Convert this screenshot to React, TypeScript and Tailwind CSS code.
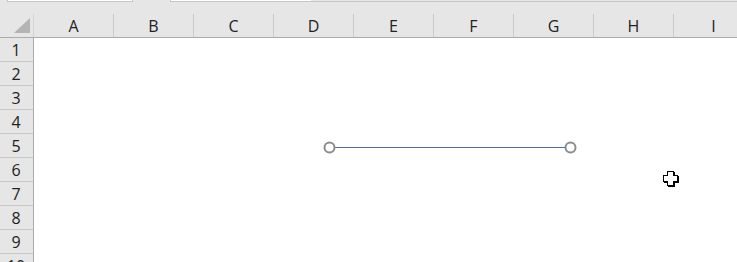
import React from "react";

const cols = ["A", "B", "C", "D", "E", "F", "G", "H", "I"];
const rows = [1, 2, 3, 4, 5, 6, 7, 8, 9, 10];

const App: React.FC = () => {
    return (
        <div className="relative w-[737px] h-[262px] overflow-hidden bg-white" style={{ fontFamily: '"Open Sans", "Liberation Sans", Arial, sans-serif' }}>
            {/* strip above the sheet */}
            <div className="flex h-[14px] bg-[#e6e6e6]">
                <div className="ml-[7px] w-[126px] h-[2px] bg-white border-b border-x border-[#c6c6c6]"></div>
                <div className="ml-[37px] w-[141px] h-[2px] bg-white border-b border-l border-[#c6c6c6]"></div>
                <div className="flex-1 h-[2px] border-b border-[#c6c6c6]"></div>
            </div>

            {/* column headers */}
            <div className="flex h-[24px] bg-[#e6e6e6] border-b border-[#ababab]">
                <div className="w-[34px] shrink-0 flex items-end justify-end pr-[3px] pb-[4px] border-r border-[#d4d4d4]">
                    <div className="w-0 h-0 border-l-[16px] border-l-transparent border-b-[15px] border-b-[#b4b4b4]"></div>
                </div>
                {cols.map((c) => (
                    <div key={c} className="w-[80px] shrink-0 flex items-center justify-center border-r border-[#c9c9c9] text-[16px] leading-none text-[#222]">
                        {c}
                    </div>
                ))}
            </div>

            {/* rows */}
            <div className="flex flex-col">
                {rows.map((r) => (
                    <div key={r} className="flex h-[24px] shrink-0">
                        <div className="w-[34px] shrink-0 flex items-center justify-center bg-[#e6e6e6] border-r border-[#ababab] border-b border-b-[#c6c6c6] text-[16px] leading-none text-[#222] pr-[1px]">
                            {r}
                        </div>
                        <div className="flex-1 bg-white"></div>
                    </div>
                ))}
            </div>

            {/* drawn line shape */}
            <svg className="absolute left-0 top-0" width="737" height="262">
                <line x1="334" y1="147.5" x2="565" y2="147.5" stroke="#4a6fae" strokeWidth="1" />
                <circle cx="329.5" cy="147.5" r="5" fill="white" stroke="#8c8c8c" strokeWidth="2" />
                <circle cx="570.5" cy="147.5" r="5" fill="white" stroke="#8c8c8c" strokeWidth="2" />
            </svg>

            {/* cell cursor */}
            <svg className="absolute left-[663px] top-[171px]" width="20" height="20" viewBox="0 0 20 20" shapeRendering="crispEdges">
                <path d="M4 0h7v4h4v7h-4v4h-7v-4h-4v-7h4z" fill="#000" transform="translate(1 1)" />
                <path d="M4 0h7v4h4v7h-4v4h-7v-4h-4v-7h4z" fill="#000" />
                <path d="M5 1h5v4h4v5h-4v4h-5v-4h-4v-5h4z" fill="#fff" />
            </svg>
        </div>
    );
};

export default App;
